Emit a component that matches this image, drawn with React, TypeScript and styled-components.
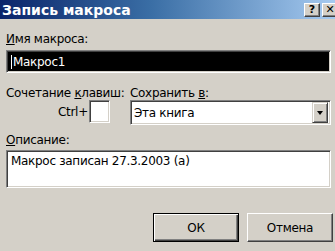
import styled, { createGlobalStyle } from 'styled-components';

const GlobalStyle = createGlobalStyle`
  html, body {
    margin: 0;
    padding: 0;
    background: #d4d0c8;
    overflow: hidden;
  }
`

const Window = styled.div`
  width: 335px;
  height: 251px;
  background: #d4d0c8;
  font-family: "DejaVu Sans", Verdana, sans-serif;
  font-size: 12px;
  letter-spacing: -0.3px;
  color: #000000;
  overflow: hidden;
  display: flex;
  flex-direction: column;
`

const TitleBar = styled.div`
  height: 19px;
  display: flex;
  align-items: center;
  justify-content: space-between;
  padding-left: 2px;
  background: linear-gradient(to right, #0a246a 0%, #3a6ea5 45%, #a6caf0 100%);
  overflow: hidden;
`

const TitleText = styled.span`
  color: #ffffff;
  font-weight: bold;
  font-size: 14px;
  letter-spacing: 0;
  white-space: nowrap;
`

const TitleButtons = styled.div`
  display: flex;
  gap: 2px;
  margin-right: -3px;
`

const TitleButton = styled.div`
  width: 14px;
  height: 12px;
  background: #d4d0c8;
  border: 1px solid;
  border-color: #ffffff #404040 #404040 #ffffff;
  box-shadow: inset -1px -1px 0 #808080;
  display: flex;
  align-items: center;
  justify-content: center;
  font-weight: bold;
  font-size: 11px;
  letter-spacing: 0;
  line-height: 1;
`

const Body = styled.div`
  display: flex;
  flex-direction: column;
  padding: 13px 4px 0 6px;
`

const Label = styled.div<{ $mt?: number }>`
  line-height: 14px;
  height: 14px;
  white-space: nowrap;
  margin-top: ${p => p.$mt ?? 0}px;
`

const Sunken = styled.div<{ $h: number; $dark?: boolean }>`
  box-sizing: border-box;
  height: ${p => p.$h}px;
  border: 1px solid;
  border-color: #808080 #ffffff #ffffff #808080;
  box-shadow: inset 1px 1px 0 #404040, inset -1px -1px 0 #d4d0c8;
  background: ${p => (p.$dark ? '#000000' : '#ffffff')};
  color: ${p => (p.$dark ? '#ffffff' : '#000000')};
  display: flex;
`

const NameField = styled(Sunken)`
  margin-top: 4px;
  align-items: center;
  padding-left: 4px;
`

const Caret = styled.span`
  width: 1px;
  height: 14px;
  background: #ffffff;
  margin-right: 1px;
`

const Row = styled.div`
  display: flex;
  margin-top: 13px;
`

const LeftCol = styled.div`
  width: 124px;
  display: flex;
  flex-direction: column;
`

const RightCol = styled.div`
  flex: 1;
  display: flex;
  flex-direction: column;
`

const CtrlGroup = styled.div`
  display: flex;
  align-items: center;
  padding-left: 52px;
`

const CtrlBox = styled(Sunken)`
  width: 21px;
  margin-left: 1px;
`

const Combo = styled(Sunken)`
  align-items: center;
  justify-content: space-between;
  padding: 2px 2px 2px 3px;
`

const DropButton = styled.div`
  box-sizing: border-box;
  width: 16px;
  height: 21px;
  background: #d4d0c8;
  border: 1px solid;
  border-color: #d4d0c8 #404040 #404040 #d4d0c8;
  box-shadow: inset 1px 1px 0 #ffffff, inset -1px -1px 0 #808080;
  display: flex;
  align-items: center;
  justify-content: center;
`

const Arrow = styled.div`
  width: 0;
  height: 0;
  border-left: 3.5px solid transparent;
  border-right: 3.5px solid transparent;
  border-top: 4px solid #000000;
`

const DescBox = styled(Sunken)`
  margin-top: 3px;
  padding: 3px 0 0 4px;
  line-height: 14px;
`

const ButtonRow = styled.div`
  display: flex;
  justify-content: flex-end;
  gap: 8px;
  margin-top: 25px;
  margin-right: -2px;
`

const PushButton = styled.div<{ $default?: boolean }>`
  box-sizing: border-box;
  width: 86px;
  height: 29px;
  display: flex;
  align-items: center;
  justify-content: center;
  background: #d4d0c8;
  border: 1px solid;
  border-color: ${p => (p.$default ? '#000000' : '#ffffff #404040 #404040 #ffffff')};
  box-shadow: ${p =>
    p.$default
      ? 'inset 1px 1px 0 #ffffff, inset -1px -1px 0 #404040, inset -2px -2px 0 #808080'
      : 'inset -1px -1px 0 #808080'};
`

const U = styled.span`
  text-decoration: underline;
  text-underline-offset: 1px;
`

export default function App() {
  return (
    <>
      <GlobalStyle />
      <Window>
        <TitleBar>
          <TitleText>Запись макроса</TitleText>
          <TitleButtons>
            <TitleButton>?</TitleButton>
            <TitleButton>✕</TitleButton>
          </TitleButtons>
        </TitleBar>
        <Body>
          <Label><U>И</U>мя макроса:</Label>
          <NameField $h={23} $dark>
            <Caret />
            Макрос1
          </NameField>
          <Row>
            <LeftCol>
              <Label>Сочетание <U>к</U>лавиш:</Label>
              <CtrlGroup>
                <span>Ctrl+</span>
                <CtrlBox $h={23} />
              </CtrlGroup>
            </LeftCol>
            <RightCol>
              <Label>Сохранить <U>в</U>:</Label>
              <Combo $h={25}>
                <span>Эта книга</span>
                <DropButton>
                  <Arrow />
                </DropButton>
              </Combo>
            </RightCol>
          </Row>
          <Label $mt={8}><U>О</U>писание:</Label>
          <DescBox $h={38}>Макрос записан 27.3.2003 (a)</DescBox>
          <ButtonRow>
            <PushButton $default>ОК</PushButton>
            <PushButton>Отмена</PushButton>
          </ButtonRow>
        </Body>
      </Window>
    </>
  )
}
